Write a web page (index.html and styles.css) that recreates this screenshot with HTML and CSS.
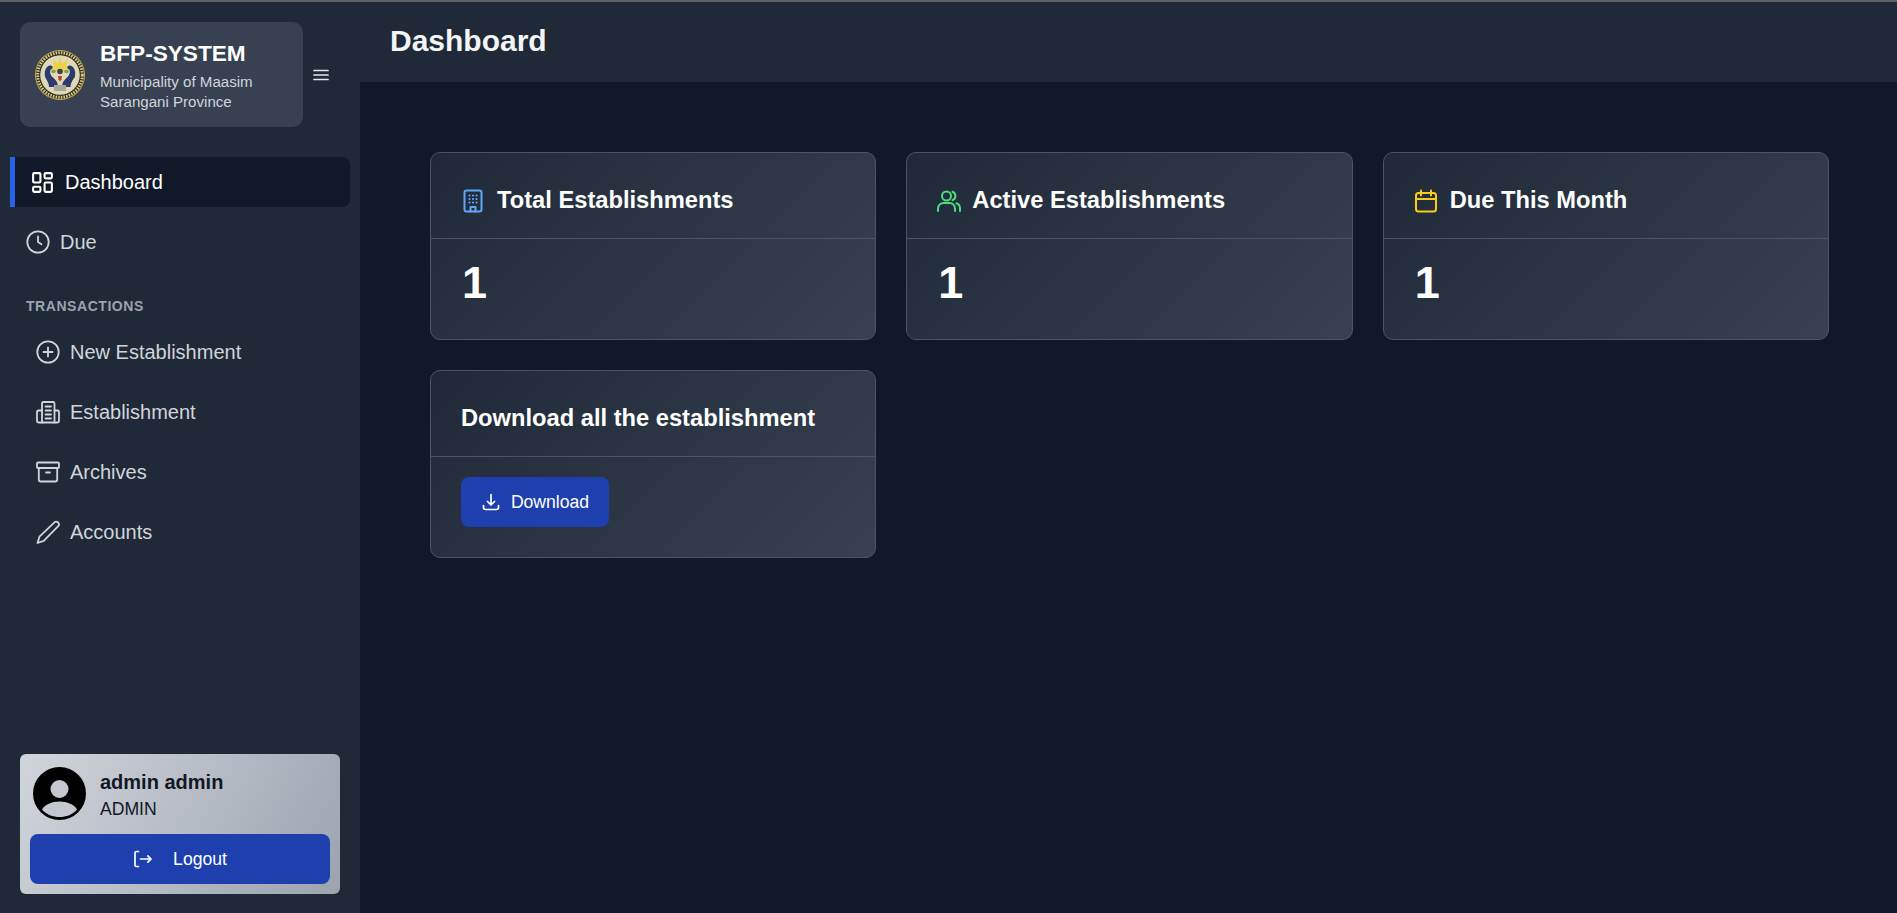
FILE: index.html
```html
<!DOCTYPE html>
<html lang="en">
<head>
<meta charset="utf-8">
<title>BFP-SYSTEM Dashboard</title>
<link rel="stylesheet" href="styles.css">
</head>
<body>
<div class="strip"></div>
<div class="shell">
  <aside class="sidebar">
    <div class="brand-row">
      <div class="brand">
        <svg class="seal" viewBox="0 0 50 50" aria-hidden="true">
          <circle cx="25" cy="25" r="25" fill="#c9a94f"/>
          <circle cx="25" cy="25" r="24" fill="#2a2a20"/>
          <circle cx="25" cy="25" r="22.300" fill="none" stroke="#d8c781" stroke-width="3" stroke-dasharray="1.600 1.100"/>
          <circle cx="25" cy="25" r="19.800" fill="#dfd9b8"/>
          <path d="M25 6.500l2.500 7.500 5.500-5-1.500 7.500 7-1-6 5.500H18l-6-5.500 7 1L17.500 9l5.500 5z" fill="#e8d24e"/>
          <path d="M10.500 28c-2-6 0-11.500 4.500-12.500 3 0 3.500 2.500 1.500 3.500-2.500 1.500-1.500 6 1.500 8.500 3 2.500 5 5 5 9.500H14c0-3-1.500-6-3.500-9z" fill="#2d3a6e"/>
          <path d="M39.500 28c2-6 0-11.500-4.500-12.500-3 0-3.500 2.500-1.500 3.500 2.500 1.500 1.500 6-1.500 8.500-3 2.500-5 5-5 9.500h8.500c0-3 1.500-6 3.500-9z" fill="#2d3a6e"/>
          <ellipse cx="18.500" cy="21.500" rx="2.500" ry="1.700" fill="#7ea06c"/>
          <ellipse cx="31.500" cy="21.500" rx="2.500" ry="1.700" fill="#7ea06c"/>
          <circle cx="25" cy="21.500" r="2.800" fill="#3f3f48"/>
          <path d="M23 26h4l-.5 3.500-1.500 2-1.500-2z" fill="#b5432f"/>
          <path d="M19 35h12v6H19z" fill="#a8a89a"/>
        </svg>
        <div class="brand-text">
          <div class="brand-name">BFP-SYSTEM</div>
          <div class="brand-sub">Municipality of Maasim</div>
          <div class="brand-sub">Sarangani Province</div>
        </div>
      </div>
      <svg class="burger" viewBox="0 0 16 12" aria-hidden="true"><path d="M1 1.500h14M1 6h14M1 10.500h14"/></svg>
    </div>

    <nav class="nav">
      <a class="nav-item active">
        <svg class="icon" viewBox="0 0 24 24" aria-hidden="true"><rect x="3" y="3" width="7" height="9" rx="1"/><rect x="14" y="3" width="7" height="5" rx="1"/><rect x="14" y="12" width="7" height="9" rx="1"/><rect x="3" y="16" width="7" height="5" rx="1"/></svg>
        <span>Dashboard</span>
      </a>
      <a class="nav-item">
        <svg class="icon thin" viewBox="0 0 24 24" aria-hidden="true"><path d="M12 6.500V12l3.500 2.200"/><circle cx="12" cy="12" r="10.700"/></svg>
        <span>Due</span>
      </a>
      <div class="nav-label">TRANSACTIONS</div>
      <a class="nav-item sub">
        <svg class="icon thin" viewBox="0 0 24 24" aria-hidden="true"><path d="M12 7.500v9M7.500 12h9"/><circle cx="12" cy="12" r="10.700"/></svg>
        <span>New Establishment</span>
      </a>
      <a class="nav-item sub">
        <svg class="icon thin" viewBox="0 0 24 24" aria-hidden="true"><path d="M6 22.500V3.500A1.500 1.500 0 0 1 7.500 2h9.500a1.500 1.500 0 0 1 1.500 1.500v19"/><path d="M6 10.500H2.500A1.500 1.500 0 0 0 1 12v9a1.500 1.500 0 0 0 1.500 1.500h19A1.500 1.500 0 0 0 23 21v-9a1.500 1.500 0 0 0-1.500-1.500h-3"/><path d="M9.500 6.500h5.500M9.500 10.500h5.500M9.500 14.500h5.500M9.500 18.500h5.500"/></svg>
        <span>Establishment</span>
      </a>
      <a class="nav-item sub">
        <svg class="icon thin" viewBox="0 0 24 24" aria-hidden="true"><path d="M2.800 8v11.500a2 2 0 0 0 2 2h14.400a2 2 0 0 0 2-2V8"/><rect x="1" y="2.500" width="22" height="5.500" rx="1"/><path d="M10 12.500h4"/></svg>
        <span>Archives</span>
      </a>
      <a class="nav-item sub">
        <svg class="icon thin" viewBox="0 0 24 24" aria-hidden="true"><path d="M19 1.800a2.900 2.900 0 0 1 3.700 3.800L7.700 20.800 1.500 23l2-6.300z"/></svg>
        <span>Accounts</span>
      </a>
    </nav>

    <div class="user-card">
      <div class="user-row">
        <svg class="avatar" viewBox="0 0 53 53" aria-hidden="true">
          <circle cx="26.500" cy="26.500" r="26.500" fill="#000"/>
          <circle class="avatar-fill" cx="26.500" cy="22" r="9"/>
          <path class="avatar-fill" d="M9 42.500c2.500-5 10-8 17.500-8s15 3 17.500 8c-4 5-11 7.500-17.500 7.500S13 47.500 9 42.500z"/>
        </svg>
        <div class="user-text">
          <div class="user-name">admin admin</div>
          <div class="user-role">ADMIN</div>
        </div>
      </div>
      <button class="btn logout" type="button">
        <svg class="btn-icon" viewBox="0 0 20 20" aria-hidden="true"><path d="M5.500 2.500H3.500A1.500 1.500 0 0 0 2 4v12a1.500 1.500 0 0 0 1.500 1.500h2M7.500 10H18M14.800 6.800 18 10l-3.200 3.200"/></svg>
        <span>Logout</span>
      </button>
    </div>
  </aside>

  <div class="content">
    <header class="topbar"><h1>Dashboard</h1></header>
    <main class="main">
      <section class="grid">
        <article class="card">
          <h2 class="card-head">
            <svg class="card-icon blue" viewBox="0 0 24 24" aria-hidden="true"><rect x="3.500" y="1.500" width="17" height="21" rx="2"/><path d="M9.500 22.500v-4.500h5v4.500"/><path class="dots" d="M8.500 6.500h.01M12 6.500h.01M15.500 6.500h.01M8.500 10h.01M12 10h.01M15.500 10h.01M8.500 13.500h.01M12 13.500h.01M15.500 13.500h.01"/></svg>
            <span>Total Establishments</span>
          </h2>
          <div class="card-body"><div class="stat">1</div></div>
        </article>
        <article class="card">
          <h2 class="card-head">
            <svg class="card-icon green" viewBox="0 0 24 24" aria-hidden="true"><circle cx="9.500" cy="7" r="4.500"/><path d="M1 22v-2.500A5.500 5.500 0 0 1 6.500 14h6a5.500 5.500 0 0 1 5.500 5.500V22"/><path d="M15.500 2.800a4.500 4.500 0 0 1 0 8.400M19.500 14.300a5.500 5.500 0 0 1 3.500 5.200V22"/></svg>
            <span>Active Establishments</span>
          </h2>
          <div class="card-body"><div class="stat">1</div></div>
        </article>
        <article class="card">
          <h2 class="card-head">
            <svg class="card-icon yellow" viewBox="0 0 24 24" aria-hidden="true"><rect x="2" y="4" width="20" height="18.500" rx="2.500"/><path d="M2 10h20M7 1.500v5M17 1.500v5"/></svg>
            <span>Due This Month</span>
          </h2>
          <div class="card-body"><div class="stat">1</div></div>
        </article>
        <article class="card">
          <h2 class="card-head"><span>Download all the establishment</span></h2>
          <div class="card-body">
            <button class="btn download" type="button">
              <svg class="btn-icon" viewBox="0 0 20 20" aria-hidden="true"><path d="M10 2.500v10M6.500 9.500l3.500 3.500 3.500-3.500M2.500 13.500V15.500a2 2 0 0 0 2 2h11a2 2 0 0 0 2-2v-2"/></svg>
              <span>Download</span>
            </button>
          </div>
        </article>
      </section>
    </main>
  </div>
</div>
</body>
</html>
```

FILE: styles.css
```css
* { box-sizing: border-box; }

html, body { height: 100%; }

body {
  margin: 0;
  display: flex;
  flex-direction: column;
  overflow: hidden;
  background: #111827;
  font-family: "Liberation Sans", Arial, sans-serif;
  color: #fff;
}

.strip { height: 2px; flex: none; background: #5f6060; }

.shell { flex: 1; min-height: 0; display: flex; }

/* Sidebar */
.sidebar {
  width: 360px;
  flex: none;
  display: flex;
  flex-direction: column;
  padding: 20px 20px 19px 0;
  background: #1f2937;
}

.brand-row { display: flex; align-items: center; gap: 10px; padding-left: 20px; }

.brand {
  width: 283px;
  height: 105px;
  display: flex;
  align-items: center;
  gap: 15px;
  padding-left: 15px;
  border-radius: 10px;
  background: #374151;
}

.seal { width: 50px; height: 50px; flex: none; }

.brand-text { padding-top: 4px; }

.brand-name {
  margin-bottom: 5px;
  font-size: 22.600px;
  font-weight: 700;
  line-height: 26px;
  color: #fff;
}

.brand-sub { font-size: 15.100px; line-height: 20px; color: #d1d5db; }

.burger {
  width: 16px;
  height: 12px;
  fill: none;
  stroke: #e5e7eb;
  stroke-width: 1.700;
  stroke-linecap: round;
}

.nav {
  display: flex;
  flex-direction: column;
  gap: 10px;
  margin-top: 30px;
  padding-left: 10px;
  width: 350px;
}

.nav-item {
  height: 50px;
  display: flex;
  align-items: center;
  gap: 10px;
  padding-left: 16px;
  font-size: 20px;
  color: #d1d5db;
}

.nav-item.active {
  padding-left: 15px;
  gap: 10px;
  border-left: 5px solid #2563eb;
  border-radius: 0 8px 8px 0;
  background: #111827;
  color: #fff;
}

.nav-item.active .icon { width: 25px; height: 25px; }

.nav-item.sub { padding-left: 26px; }

.nav-label {
  margin: 19px 0 1px 16px;
  font-size: 14px;
  font-weight: 700;
  line-height: 20px;
  letter-spacing: .55px;
  color: #9ca3af;
}

.icon {
  width: 24px;
  height: 24px;
  flex: none;
  fill: none;
  stroke: currentColor;
  stroke-width: 2;
  stroke-linecap: round;
  stroke-linejoin: round;
}

.icon.thin { stroke-width: 1.800; }

/* User card */
.user-card {
  margin: auto 0 0 20px;
  height: 140px;
  padding: 13px 10px 10px;
  border-radius: 6px;
  background: linear-gradient(120deg, #d1d5db, #9ca3af);
}

.user-row { display: flex; align-items: center; gap: 14px; padding-left: 3px; height: 53px; }

.avatar { width: 53px; height: 53px; flex: none; }

.avatar-fill { fill: #c3c7cf; }

.user-text { padding-top: 4px; }

.user-name { font-size: 20px; font-weight: 700; line-height: 27px; color: #111827; }

.user-role { font-size: 17.600px; line-height: 26px; color: #111827; }

.btn {
  display: flex;
  align-items: center;
  height: 50px;
  border: 0;
  border-radius: 8px;
  background: #1e40af;
  color: #fff;
  font-family: inherit;
  font-size: 17.600px;
}

.btn-icon {
  width: 20px;
  height: 20px;
  flex: none;
  fill: none;
  stroke: currentColor;
  stroke-width: 1.700;
  stroke-linecap: round;
  stroke-linejoin: round;
}

.logout { width: 300px; margin-top: 14px; justify-content: center; gap: 20px; }

.download { width: 148px; justify-content: center; gap: 10px; }

/* Content */
.content { flex: 1; min-width: 0; display: flex; flex-direction: column; }

.topbar {
  height: 80px;
  flex: none;
  display: flex;
  align-items: center;
  padding-left: 30px;
  padding-bottom: 2px;
  background: #1f2937;
}

.topbar h1 { margin: 0; font-size: 30px; font-weight: 700; color: #f3f4f6; }

.main { flex: 1; padding: 70px 68px 0 70px; background: #111827; }

.grid {
  display: grid;
  grid-template-columns: repeat(3, 1fr);
  gap: 30px;
}

.card {
  height: 188px;
  display: flex;
  flex-direction: column;
  border: 1px solid #4b5563;
  border-radius: 10px;
  background: linear-gradient(135deg, #1f2937, #374151);
}

.card-head {
  height: 86px;
  flex: none;
  display: flex;
  align-items: center;
  gap: 12px;
  margin: 0;
  padding: 10px 30px 0;
  border-bottom: 1px solid #4b5563;
  font-size: 23.700px;
  font-weight: 700;
  color: #fff;
}

.card-icon {
  width: 24px;
  height: 24px;
  flex: none;
  fill: none;
  stroke: currentColor;
  stroke-width: 2;
  stroke-linecap: round;
  stroke-linejoin: round;
}

.card-icon.green { margin-right: -1px; }

.blue { color: #60a5fa; }
.green { color: #4ade80; }
.yellow { color: #facc15; }

.dots { stroke-width: 2.200; }

.card-body { padding: 20px 30px; }

.stat { padding-left: 1px; font-size: 45px; font-weight: 700; line-height: 48px; color: #fff; }
```
